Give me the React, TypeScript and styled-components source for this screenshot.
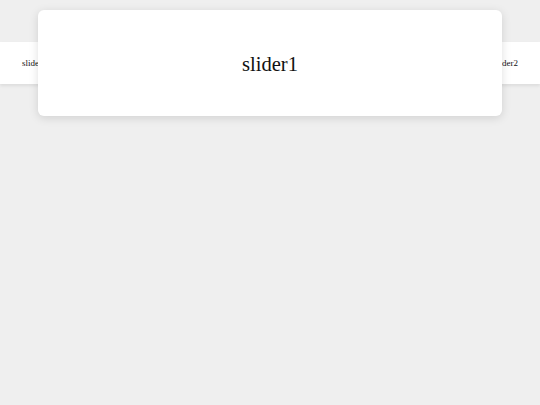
import React from "react";
import styled, { createGlobalStyle } from "styled-components";

const GlobalStyle = createGlobalStyle`
  html, body {
    margin: 0;
    padding: 0;
    background: #efefef;
  }
  body {
    font-family: "Liberation Serif", "Times New Roman", serif;
    color: #111;
  }
`;

const Stage = styled.div`
  display: grid;
  width: 540px;
  height: 405px;
  background: #efefef;
  overflow: hidden;
`;

const Track = styled.div`
  grid-area: 1 / 1;
  align-self: start;
  margin-top: 42px;
  height: 42px;
  display: flex;
  align-items: center;
  justify-content: space-between;
  padding: 0 22px;
  background: #fff;
  box-shadow: 0 2px 3px rgba(0, 0, 0, 0.08);
`;

const SideLabel = styled.span`
  font-size: 9px;
  line-height: 1;
  padding-top: 1px;
`;

const ActiveSlide = styled.div`
  grid-area: 1 / 1;
  align-self: start;
  justify-self: center;
  margin-top: 10px;
  width: 464px;
  height: 106px;
  display: flex;
  align-items: center;
  justify-content: center;
  background: #fff;
  border-radius: 6px;
  box-shadow: 0 2px 10px rgba(0, 0, 0, 0.13);
`;

const ActiveLabel = styled.span`
  font-size: 20.6px;
  line-height: 1;
  padding-top: 2px;
`;

export default function App() {
  return (
    <>
      <GlobalStyle />
      <Stage>
        <Track>
          <SideLabel>slider3</SideLabel>
          <SideLabel>slider2</SideLabel>
        </Track>
        <ActiveSlide>
          <ActiveLabel>slider1</ActiveLabel>
        </ActiveSlide>
      </Stage>
    </>
  );
}
